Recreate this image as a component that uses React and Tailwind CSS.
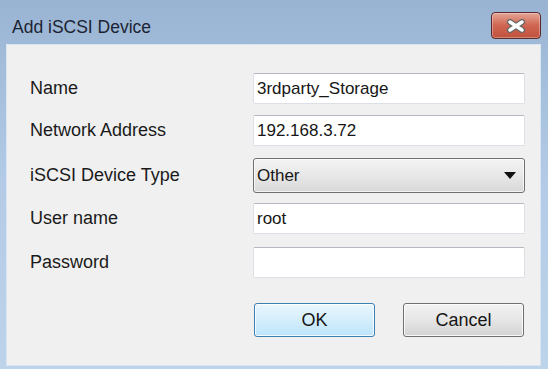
import React from 'react';

const font = { fontFamily: '"Liberation Sans", Arial, sans-serif' };

function TextBox({ value }) {
  return (
    <div className="w-[272px] h-[31px] bg-white rounded-[2px] border border-[#dcdfe6] border-t-[#b5b8c0] flex items-center pl-[3px] text-[17px] text-[#161616]">
      {value}
    </div>
  );
}

function Row({ label, children, className = '' }) {
  return (
    <div className={`flex items-center ${className}`}>
      <div className="w-[223px] text-[18px] text-[#1a1a1a]">{label}</div>
      {children}
    </div>
  );
}

function CloseButton() {
  return (
    <div className="w-[50px] h-[27px] rounded-[4px] border border-[#5b2a2a] bg-gradient-to-b from-[#e4a596] via-[#cf6552] to-[#c0523c] flex items-center justify-center shadow-[inset_0_0_0_1px_rgba(255,255,255,0.3)]">
      <svg width="24" height="14" viewBox="0 0 24 14">
        <path d="M6 3 L18 11 M18 3 L6 11" stroke="#666666" strokeWidth="6" strokeLinecap="round" />
        <path d="M6 3 L18 11 M18 3 L6 11" stroke="#ffffff" strokeWidth="3.5" strokeLinecap="round" />
      </svg>
    </div>
  );
}

export default function App() {
  return (
    <div
      className="w-[548px] h-[369px] overflow-hidden flex flex-col bg-gradient-to-b from-[#99b4d3] via-[#b3cbe6] to-[#bcd3ea]"
      style={font}
    >
      {/* Title bar */}
      <div className="h-[44px] flex items-start justify-between pl-[12px] pr-[7px]">
        <span className="mt-[19px] text-[17.5px] leading-none text-[#1c2433]">Add iSCSI Device</span>
        <div className="mt-[12px]">
          <CloseButton />
        </div>
      </div>

      {/* Client area */}
      <div className="ml-[6px] mr-[7px] h-[322px] bg-[#f0f0f0] border border-[#d9e5f2] pl-[23px] pt-[28px]">
        <Row label="Name">
          <TextBox value="3rdparty_Storage" />
        </Row>
        <Row label="Network Address" className="mt-[11px]">
          <TextBox value="192.168.3.72" />
        </Row>
        <Row label="iSCSI Device Type" className="mt-[12px]">
          <div className="w-[272px] h-[35px] rounded-[3px] border border-[#707070] bg-gradient-to-b from-[#f3f3f3] via-[#e8e8e8] to-[#d8d8d8] flex items-center justify-between pl-[3px] pr-[8px] text-[17px] text-[#161616] shadow-[inset_0_0_0_1px_rgba(255,255,255,0.7)]">
            <span>Other</span>
            <svg width="12" height="7" viewBox="0 0 12 7">
              <path d="M0 0 L12 0 L6 7 Z" fill="#111" />
            </svg>
          </div>
        </Row>
        <Row label="User name" className="mt-[10px]">
          <TextBox value="root" />
        </Row>
        <Row label="Password" className="mt-[13px]">
          <TextBox value="" />
        </Row>
        <div className="flex gap-[28px] mt-[25px] ml-[224px]">
          <div className="w-[121px] h-[34px] rounded-[3px] border border-[#3c7fb1] bg-gradient-to-b from-[#eaf6fd] via-[#d4eefc] to-[#bde5fc] flex items-center justify-center text-[18px] text-[#161616] shadow-[inset_0_0_0_1px_rgba(255,255,255,0.8)]">
            OK
          </div>
          <div className="w-[121px] h-[34px] rounded-[3px] border border-[#707070] bg-gradient-to-b from-[#f2f2f2] via-[#e6e6e6] to-[#d3d3d3] flex items-center justify-center text-[18px] text-[#161616] shadow-[inset_0_0_0_1px_rgba(255,255,255,0.8)]">
            Cancel
          </div>
        </div>
      </div>
    </div>
  );
}
